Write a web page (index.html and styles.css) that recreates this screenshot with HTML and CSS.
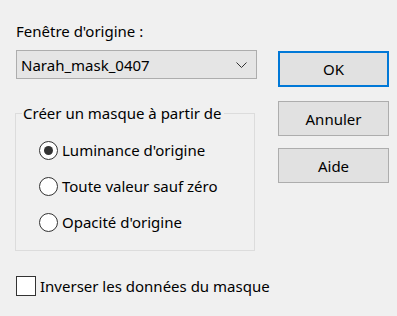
FILE: index.html
```html
<!DOCTYPE html>
<html lang="fr">
<head>
<meta charset="utf-8">
<title>Masque</title>
<link rel="stylesheet" href="styles.css">
</head>
<body>
<div class="dialog">
  <div class="left">
    <div class="field-label">Fenêtre d'origine :</div>
    <div class="combo">
      <span class="combo-text">Narah_mask_0407</span>
      <svg class="chev" width="11" height="6" viewBox="0 0 11 6"><path d="M0.5 0.5 L5.5 5.5 L10.5 0.5" fill="none" stroke="#333" stroke-width="1"/></svg>
    </div>
    <fieldset class="group">
      <legend class="legend">Créer un masque à partir de</legend>
      <div class="opt"><span class="radio checked"></span><span>Luminance d'origine</span></div>
      <div class="opt"><span class="radio"></span><span>Toute valeur sauf zéro</span></div>
      <div class="opt"><span class="radio"></span><span>Opacité d'origine</span></div>
    </fieldset>
    <div class="check-row"><span class="checkbox"></span><span class="nowrap">Inverser les données du masque</span></div>
  </div>
  <div class="right">
    <div class="btn btn-default">OK</div>
    <div class="btn btn-cancel">Annuler</div>
    <div class="btn btn-help">Aide</div>
  </div>
</div>
</body>
</html>
```
FILE: styles.css
```css
html, body {
  margin: 0;
  padding: 0;
  background: #f0f0f0;
}
body {
  font-family: "Noto Sans", "Open Sans", sans-serif;
  font-size: 15px;
  line-height: 20px;
  color: #000;
  width: 397px;
  height: 316px;
  overflow: hidden;
}
.dialog {
  display: flex;
  padding: 21px 0 0 15px;
  gap: 21px;
}
.left {
  width: 242px;
  display: flex;
  flex-direction: column;
}
.field-label {
  margin-left: 1px;
  height: 20px;
}
.combo {
  margin: 9px 0 0 1px;
  height: 27px;
  border: 1px solid #adadad;
  background: #e5e5e5;
  display: flex;
  align-items: center;
  justify-content: space-between;
  padding: 0 9px 0 4px;
}
.chev {
  display: block;
  margin-top: 1px;
}
.group {
  margin: 24px 0 0 0;
  padding: 9px 0 10px 23px;
  border: 1px solid #dcdcdc;
  width: 240px;
  box-sizing: border-box;
  min-width: 0;
}
.legend {
  margin-left: -17px;
  padding: 0 2px 0 1px;
}
.opt {
  height: 36px;
  display: flex;
  align-items: center;
  gap: 4px;
}
.radio {
  width: 19px;
  height: 19px;
  box-sizing: border-box;
  border: 1px solid #333;
  border-radius: 50%;
  background: #fff;
  display: flex;
  align-items: center;
  justify-content: center;
}
.radio.checked::after {
  content: "";
  width: 9px;
  height: 9px;
  border-radius: 50%;
  background: #333;
}
.check-row {
  margin: 25px 0 0 1px;
  height: 20px;
  display: flex;
  align-items: center;
  gap: 4px;
}
.nowrap {
  white-space: nowrap;
}
.checkbox {
  flex: none;
  width: 20px;
  height: 20px;
  box-sizing: border-box;
  border: 1px solid #333;
  background: #fff;
}
.right {
  display: flex;
  flex-direction: column;
  padding-top: 30px;
}
.btn {
  width: 111px;
  height: 35px;
  box-sizing: border-box;
  border: 1px solid #adadad;
  background: #e1e1e1;
  display: flex;
  align-items: center;
  justify-content: center;
}
.btn-default {
  border: 2px solid #0078d7;
  height: 36px;
}
.btn-cancel {
  margin-top: 14px;
}
.btn-help {
  margin-top: 12px;
}
```
